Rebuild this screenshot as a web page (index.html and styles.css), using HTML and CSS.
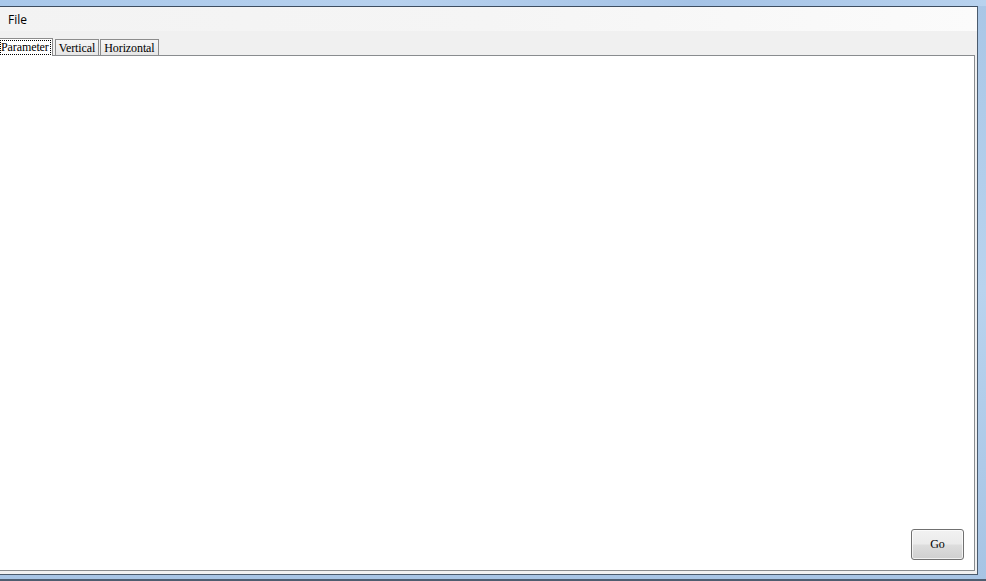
FILE: index.html
```html
<!DOCTYPE html>
<html>
<head>
<meta charset="utf-8">
<link rel="stylesheet" href="styles.css">
</head>
<body>
<div class="window">
  <div class="top-frame"></div>
  <div class="client">
    <div class="menubar"><span class="menu-item">File</span></div>
    <div class="tabarea">
      <div class="tabs">
        <div class="tab selected"><span class="focus">Parameter</span></div>
        <div class="tab">Vertical</div>
        <div class="tab">Horizontal</div>
      </div>
      <div class="panel">
        <button class="btn">Go</button>
      </div>
    </div>
  </div>
</div>
</body>
</html>
```
FILE: styles.css
```css
html, body {
  margin: 0;
  padding: 0;
}
body {
  width: 986px;
  height: 581px;
  overflow: hidden;
}
.window {
  width: 986px;
  height: 581px;
  display: flex;
  flex-direction: column;
  background: linear-gradient(to bottom, #a9c6e6, #b9d3ee 50%, #a7c4e4);
  box-sizing: border-box;
  border-bottom: 2px solid #4e5d70;
}
.top-frame {
  height: 6px;
  background: linear-gradient(to right, #a9c8ea, #b7d1ee 40%, #a5c3e6 70%, #b8d2ee);
  flex: none;
}
.client {
  flex: 1;
  margin-right: 8px;
  margin-bottom: 4px;
  border-top: 1px solid #3d4d60;
  border-right: 1px solid #4a5a6c;
  border-bottom: 1px solid #4a5a6c;
  background: #f0f0f0;
  display: flex;
  flex-direction: column;
}
.menubar {
  height: 24px;
  flex: none;
  background: linear-gradient(to right, #f3f3f3, #f5f5f5 50%, #fbfbfb);
  display: flex;
  align-items: center;
  font-family: "Open Sans", "DejaVu Sans", sans-serif;
  font-size: 12px;
  color: #000;
}
.menu-item {
  padding-left: 8px;
}
.tabarea {
  flex: 1;
  display: flex;
  flex-direction: column;
  padding-top: 6px;
  padding-right: 2px;
  padding-bottom: 3px;
}
.tabs {
  display: flex;
  align-items: flex-end;
  height: 18px;
  font-family: "Liberation Serif", serif;
  font-size: 12px;
  letter-spacing: -0.1px;
  color: #000;
  position: relative;
  z-index: 1;
}
.tab {
  height: 16px;
  box-sizing: border-box;
  border: 1px solid #8c8c8c;
  border-bottom: none;
  background: linear-gradient(to bottom, #f6f6f6, #e6e6e6);
  padding: 1px 3px 0 3px;
  margin-left: 1px;
  line-height: 15px;
  white-space: nowrap;
}
.tab.selected {
  height: 18px;
  margin-bottom: -1px;
  background: #fff;
  padding: 1px 1px 0 0;
  margin-left: 0;
  margin-right: 1px;
  border-left: none;
}
.focus {
  display: inline-block;
  border: 1px dotted #000;
  padding: 0 1px 0 0;
  line-height: 13px;
}
.panel {
  flex: 1;
  background: #fff;
  border: 1px solid #898c8f;
  border-left: none;
  display: flex;
  justify-content: flex-end;
  align-items: flex-end;
  padding: 0 10px 10px 0;
}
.btn {
  width: 53px;
  height: 31px;
  border: 1px solid #707070;
  border-radius: 3px;
  background: linear-gradient(to bottom, #f2f2f2, #ebebeb 48%, #dddddd 52%, #cfcfcf);
  font-family: "Liberation Serif", serif;
  font-size: 12px;
  color: #000;
  padding: 0;
  box-shadow: inset 0 0 0 1px rgba(255,255,255,0.7);
}
```
